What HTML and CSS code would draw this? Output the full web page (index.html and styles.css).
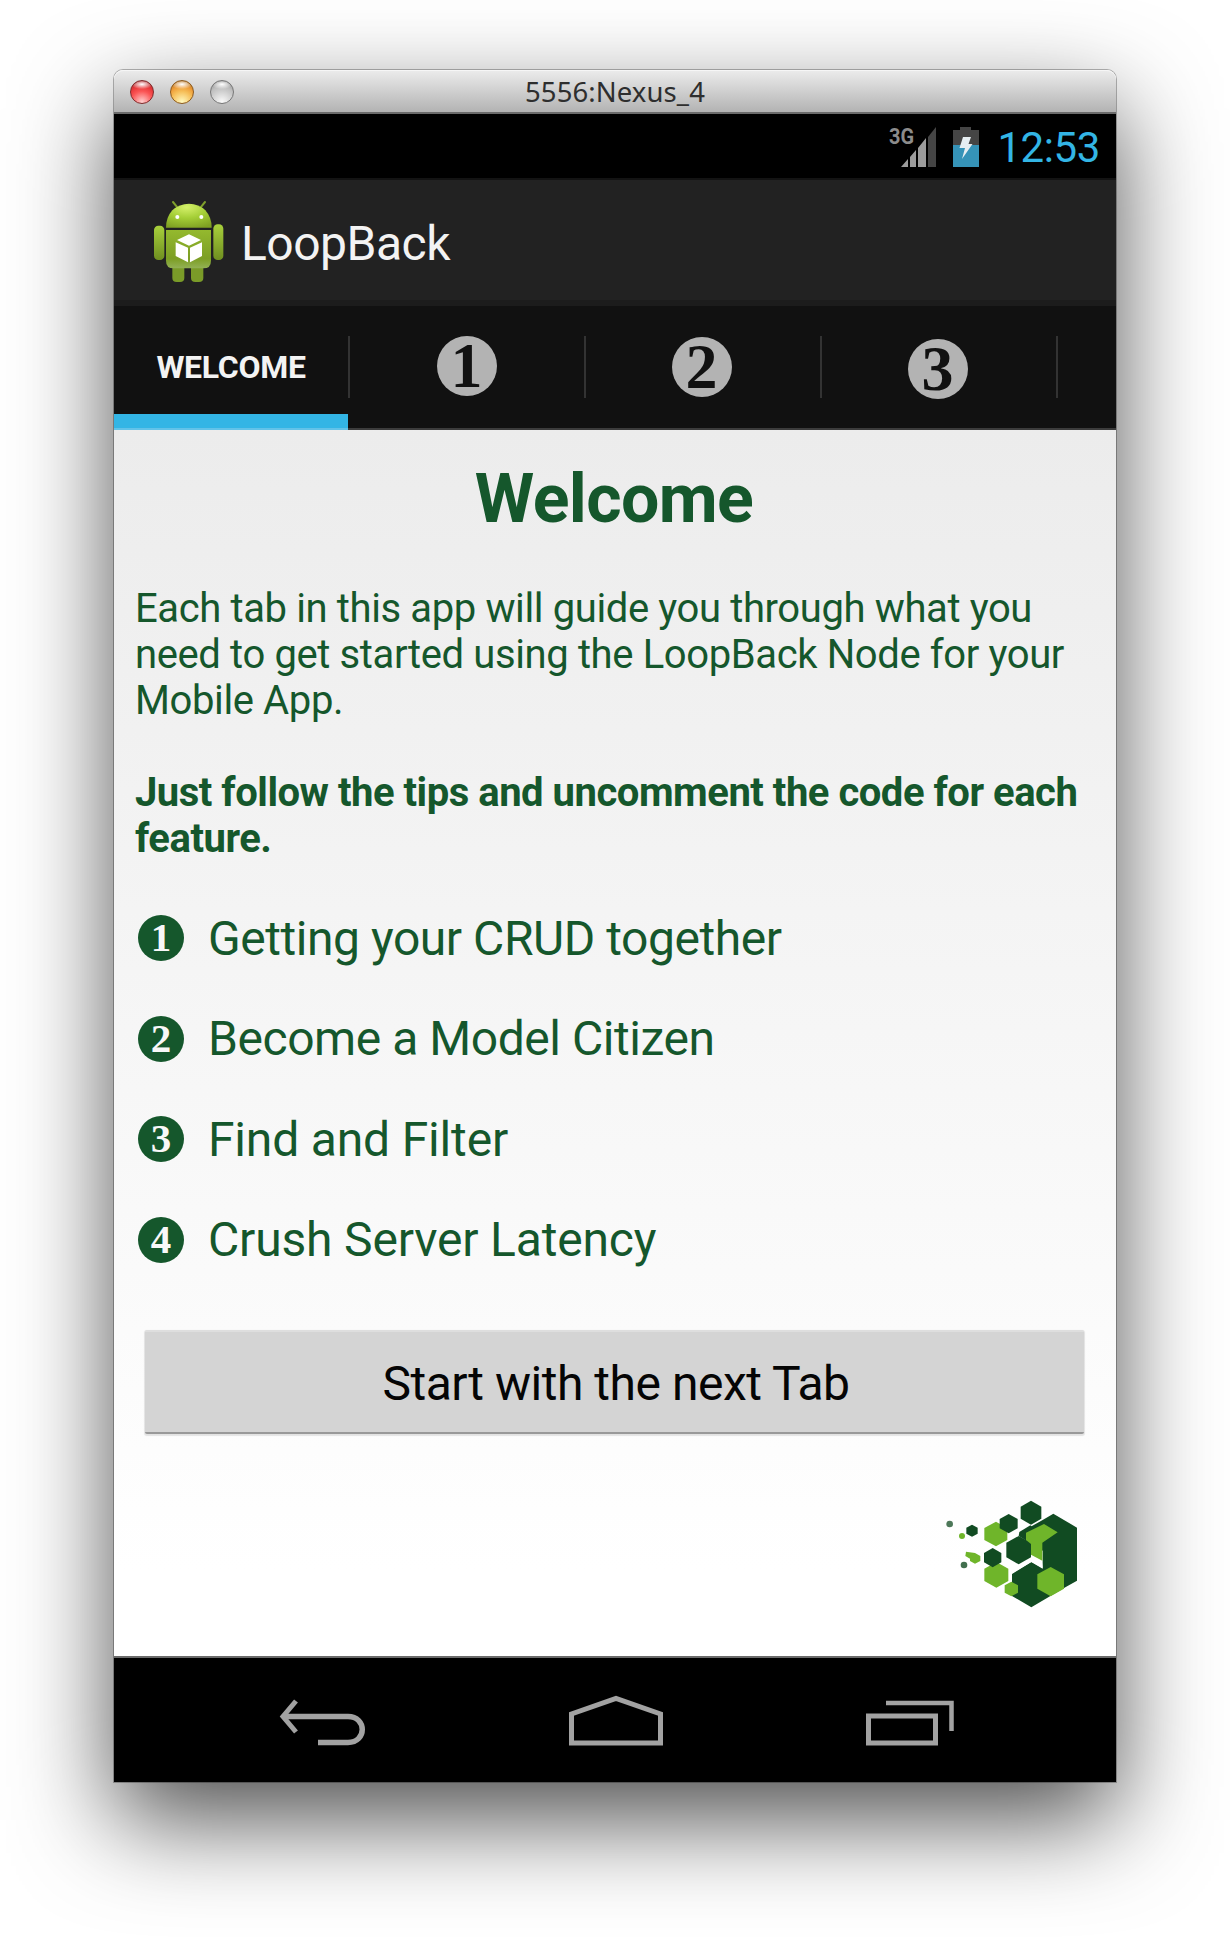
FILE: index.html
```
<!DOCTYPE html>
<html lang="en">
<head>
<meta charset="utf-8">
<title>5556:Nexus_4</title>
<link rel="stylesheet" href="styles.css">
</head>
<body>
<div class="window">
  <header class="titlebar">
    <div class="lights"><span class="light red"></span><span class="light amber"></span><span class="light grey"></span></div>
    <span class="window-title">5556:Nexus_4</span>
  </header>

  <div class="statusbar">
    <svg class="signal" viewBox="0 0 50 42" width="50" height="42">
      <text x="1" y="18" textLength="25" lengthAdjust="spacingAndGlyphs">3G</text>
      <path fill="#9c9c9c" d="M13 41L20 33V41ZM22 31L28 24V41H22ZM30 22L38 12V41H30Z"/>
      <path fill="#454545" d="M40 11L48 1V41H40Z"/>
    </svg>
    <svg class="battery" viewBox="0 0 26 40" width="26" height="40">
      <path fill="#454545" d="M0 3H7V0H18V3H26V18H0Z"/>
      <path fill="#3593b8" d="M0 18H26V40H0Z"/>
      <path fill="#e6eef2" d="M10 10H18L15.500 17H19.500L9 32L12 21H6.500Z"/>
    </svg>
    <span class="clock">12:53</span>
  </div>

  <div class="actionbar">
    <svg class="app-icon" viewBox="0 0 300 330" width="100" height="110">
      <defs>
        <radialGradient id="dome" cx=".45" cy=".15" r=".9"><stop offset="0" stop-color="#d4f06a"/><stop offset=".5" stop-color="#a4ce36"/><stop offset="1" stop-color="#7fa022"/></radialGradient>
        <linearGradient id="body" x1="0" x2="0" y1="0" y2="1"><stop offset="0" stop-color="#94b92e"/><stop offset=".75" stop-color="#7c9e24"/><stop offset="1" stop-color="#93b155"/></linearGradient>
        <linearGradient id="limb" x1="0" x2="0" y1="0" y2="1"><stop offset="0" stop-color="#a9d13c"/><stop offset="1" stop-color="#6f8f20"/></linearGradient>
      </defs>
      <path d="M99 36L112 52M195 36L182 52" stroke="#7f9f2c" stroke-width="6" stroke-linecap="round"/>
      <rect x="42" y="107" width="31" height="103" rx="13" fill="url(#limb)"/>
      <rect x="220" y="103" width="30" height="107" rx="13" fill="url(#limb)"/>
      <path d="M97 225H133V264Q133 276 120 276H110Q97 276 97 264ZM153 225H190V264Q190 276 177 276H166Q153 276 153 264Z" fill="#7a9b28"/>
      <path d="M78 113Q78 82 97 61Q118 41 147 41Q176 41 196 61Q215 82 215 113Z" fill="url(#dome)"/>
      <path d="M78 120H213V212Q213 235 190 235H101Q78 235 78 212Z" fill="url(#body)"/>
      <circle cx="112" cy="81" r="6" fill="#fff"/><circle cx="184" cy="81" r="6" fill="#fff"/>
      <path d="M147 133L183 150L147 167L111 150ZM107 157L144 173V217L107 198ZM186 157L150 173V217L186 198Z" fill="#fff"/>
    </svg>
    <span class="app-name">LoopBack</span>
  </div>

  <nav class="tabs">
    <div class="tab active">WELCOME</div>
    <div class="tab"><span class="disc one">1</span></div>
    <div class="tab"><span class="disc two">2</span></div>
    <div class="tab"><span class="disc three">3</span></div>
  </nav>

  <main class="content">
    <h1>Welcome</h1>
    <p class="intro">Each tab in this app will guide you through what you<br>need to get started using the LoopBack Node for your<br>Mobile App.</p>
    <p class="intro strong">Just follow the tips and uncomment the code for each<br>feature.</p>
    <ul class="steps">
      <li><span class="num">1</span>Getting your CRUD together</li>
      <li><span class="num">2</span>Become a Model Citizen</li>
      <li class="loose"><span class="num">3</span>Find and Filter</li>
      <li class="loose"><span class="num">4</span>Crush Server Latency</li>
    </ul>
    <button class="start">Start with the next Tab</button>
    <svg class="logo" viewBox="0 0 570 450" width="190" height="150">
      <g fill="#114b22">
        <path d="M400 101L471 143V302L432 324L334 382L276 348V282L334 246L368 266V212L320 190L297 170L300 158L368 120Z"/>
        <path d="M333 62L364 80V116L333 134L302 116V80Z"/>
      </g>
      <path fill="#fff" d="M262 178L296 158L318 170L345 225L365 240L368 264L334 246L276 280L262 250Z"/>
      <g fill="#114b22">
        <path d="M296 168L333 188V232L296 253L259 232V188Z"/>
        <path d="M298 156L331 136L348 150L340 195L296 168Z"/>
      </g>
      <g fill="#6fb52a">
        <path d="M372 132L413 157L367 188V242L333 224V192L318 180V158Z"/>
        <path d="M392 261L432 283V326L392 349L352 326V283Z"/>
        <path d="M228 125L262 144V180L228 199L193 180V144Z"/>
        <path d="M229 246L265 266V303L229 323L193 303V266Z"/>
        <path d="M274 305L294 316V338L274 349L254 338V316Z"/>
        <path d="M138 215L165 219L181 228V243L165 251L150 243V236L136 228Z"/>
        <circle cx="126" cy="168" r="9"/>
      </g>
      <g fill="#114b22">
        <path d="M266 102L293 117V145L266 160L239 145V117Z"/>
        <path d="M218 204L244 219V247L218 262L192 247V219Z"/>
        <path d="M156 134L173 143V161L156 170L139 161V143Z"/>
        <circle cx="89" cy="132" r="10" opacity=".75"/><circle cx="132" cy="255" r="10" opacity=".8"/>
      </g>
    </svg>
  </main>

  <footer class="navbar">
    <svg viewBox="0 0 86 50" width="86" height="50"><path d="M16 3L3 18.500L16 34" stroke-width="5"/><path d="M3 18.500H68C87 18.500 87 44.500 68 44.500H38" stroke-width="5.500"/></svg>
    <svg viewBox="0 0 94 50" width="94" height="50"><path d="M2.500 45V16L47 .500L91.500 16V45Z" stroke-width="5"/></svg>
    <svg viewBox="0 0 88 50" width="88" height="50"><path d="M2.500 18H69.500V45H2.500Z" stroke-width="5"/><path d="M20 5H85.500V33" stroke-width="4.500"/></svg>
  </footer>
</div>
</body>
</html>
```
FILE: styles.css
```
* { box-sizing: border-box; }

body {
  margin: 0;
  background: #fff;
  font-family: Roboto, "Liberation Sans", sans-serif;
  overflow: hidden;
}

.window {
  width: 1002px;
  height: 1712px;
  margin: 70px 0 158px 114px;
  display: flex;
  flex-direction: column;
  border-radius: 9px 9px 0 0;
  box-shadow: 0 0 0 1px rgba(0, 0, 0, .28), 0 38px 98px rgba(0, 0, 0, .69);
}

/* Desktop window frame */
.titlebar {
  height: 44px;
  display: grid;
  grid-template-columns: 1fr auto 1fr;
  align-items: center;
  padding-left: 16px;
  border-bottom: 2px solid #6b6b6b;
  border-radius: 9px 9px 0 0;
  background: linear-gradient(#ececec, #b3b3b3);
  box-shadow: inset 0 1px #f6f6f6;
}
.lights { display: flex; gap: 16px; padding-top: 2px; }
.light { width: 24px; height: 24px; border-radius: 50%; border: 1px solid; }
.red {
  border-color: #7e2b2b;
  background: radial-gradient(ellipse 50% 22% at 50% 15%, #fff, transparent), radial-gradient(circle at 50% 95%, #ffd0d0, #fb5656 45%, #e93a3c 65%, #8d1d20);
}
.amber {
  border-color: #8d5a1d;
  background: radial-gradient(ellipse 50% 22% at 50% 15%, #fff, transparent), radial-gradient(circle at 50% 95%, #fffac0, #f6be58 45%, #ee9d39 65%, #93560f);
}
.grey {
  border-color: #777;
  background: radial-gradient(ellipse 50% 22% at 50% 15%, #fff, transparent), radial-gradient(circle at 50% 95%, #fafafa, #cfcfcf 45%, #bdbdbd 65%, #777);
}
.window-title {
  margin-left: -16px;
  padding-top: 2px;
  font: 27.500px/40px "Noto Sans", sans-serif;
  letter-spacing: .1px;
  color: #2e2e2e;
}

/* Android chrome */
.statusbar {
  height: 66px;
  display: flex;
  justify-content: flex-end;
  align-items: center;
  padding: 2px 16px 0 0;
  background: #000;
  border-bottom: 2px solid #131313;
}
.signal { overflow: visible; }
.signal text { font: 700 22px Roboto, sans-serif; fill: #8c8c8c; }
.battery { margin-left: 15px; }
.clock { margin-left: 18px; padding-top: 2px; font-size: 42px; line-height: 60px; letter-spacing: -.400px; color: #33b5e5; }

.actionbar {
  height: 126px;
  display: flex;
  align-items: center;
  padding: 0 26px 0;
  background: #222;
  border-bottom: 6px solid #1c1c1c;
}
.app-icon { margin-top: 10px; }
.app-name { margin-left: 1px; padding-top: 6px; font-size: 48px; letter-spacing: -.500px; color: #f3f3f3; }

.tabs {
  height: 124px;
  flex: none;
  display: flex;
  background: linear-gradient(#3c3c3c, #3c3c3c) 0 100% / 100% 2px no-repeat, #111;
}
.tab {
  width: 236px;
  padding-top: 30px;
  display: flex;
  justify-content: center;
  background: linear-gradient(#333, #333) 100% 30px / 2px 62px no-repeat;
}
.active {
  padding: 41px 2px 0 0;
  font-weight: 700;
  font-size: 32px;
  line-height: 40px;
  letter-spacing: -.300px;
  color: #f3f3f3;
  background: linear-gradient(#333, #333) 100% 30px / 2px 62px no-repeat, linear-gradient(#33b5e5 14px, #62c3e9 14px) 0 100% / 234px 16px no-repeat;
}
.disc {
  width: 60px;
  height: 60px;
  border-radius: 50%;
  background: #b3b3b3;
  color: #111;
  text-align: center;
  font: 700 64px/60px "Liberation Serif", serif;
}
.one { margin: 0 3px 0 0; }
.two { margin: 1px 5px 0 0; }
.three { margin: 3px 5px 0 0; }

/* Page */
.content {
  height: 1226px;
  flex: none;
  display: flex;
  flex-direction: column;
  padding: 29px 6px 0 21px;
  color: #15572c;
  background: linear-gradient(#ececec, #fff 93%);
}
h1 { margin: 0 17px 47px 0; text-align: center; font-size: 68px; line-height: 80px; letter-spacing: -.600px; }
.intro { margin: 0; font-size: 40px; line-height: 46px; letter-spacing: -.380px; white-space: nowrap; }
.strong { margin-top: 46px; font-weight: 700; letter-spacing: -.480px; }
.steps { list-style: none; margin: 26px 0 0; padding: 0; }
.steps li { height: 100.500px; display: flex; align-items: center; font-size: 48px; letter-spacing: -.450px; }
.steps .loose { letter-spacing: -.170px; }
.num {
  width: 46px;
  height: 46px;
  margin: 0 24px 0 3px;
  border-radius: 50%;
  background: #15572c;
  color: #f8f8f8;
  text-align: center;
  letter-spacing: 0;
  font: 700 41px/45px "Liberation Serif", serif;
}
.start {
  width: 939px;
  height: 104px;
  flex: none;
  margin: 40px 0 0 10px;
  padding: 2px 0 0 3px;
  border: 0;
  border-top: 2px solid #dedede;
  border-bottom: 2px solid #999;
  border-radius: 2px;
  background: #d4d4d4;
  box-shadow: 0 1px 1px 1px rgba(0, 0, 0, .1);
  color: #050505;
  font: 48px Roboto, sans-serif;
  letter-spacing: -.480px;
}
.logo { margin: 46px 0 0 auto; flex: none; }

.navbar {
  height: 126px;
  display: flex;
  align-items: flex-start;
  padding: 40px 162px 0 166px;
  justify-content: space-between;
  background: #000;
  border-top: 2px solid #6b6b6b;
}
.navbar svg { fill: none; stroke: #a2a2a2; overflow: visible; }
```
